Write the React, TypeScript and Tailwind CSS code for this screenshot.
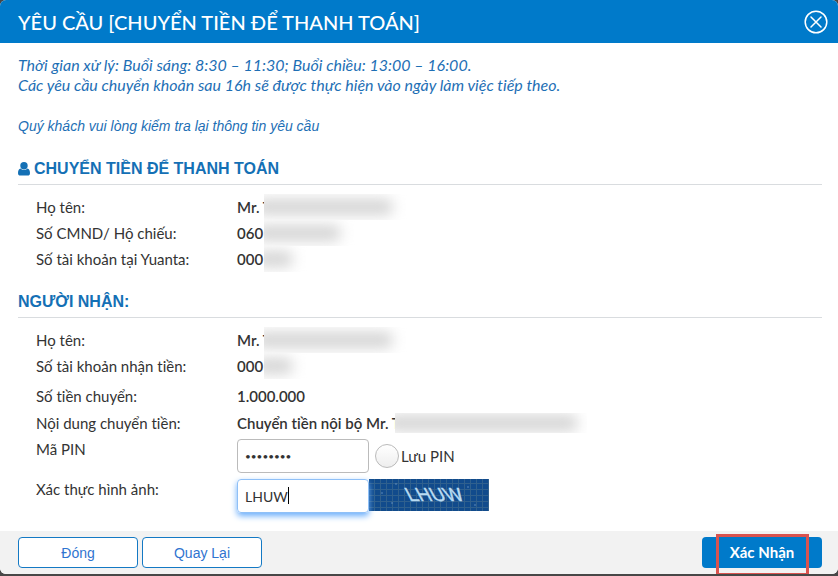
import { useState } from "react";
import type { ReactNode } from "react";

function Redacted({ bars }: { bars: string }) {
  return (
    <span aria-hidden="true" className="relative flex h-full w-48 items-center overflow-hidden bg-white">
      <span className={`-ml-2 shrink-0 rounded-sm bg-[#d4d4d4] blur-[7px] ${bars}`} />
    </span>
  );
}

function Row({ label, children, height = "h-[26px]" }: { label: string; children: ReactNode; height?: string }) {
  return (
    <div className={`flex items-center ${height}`}>
      <dt className="w-[201px] shrink-0">{label}</dt>
      <dd className="flex h-full min-w-0 items-center font-semibold whitespace-nowrap">{children}</dd>
    </div>
  );
}

function SectionTitle({ children }: { children: ReactNode }) {
  return (
    <h2 className="flex h-8 items-center gap-1 border-b border-[#d9dcdf] pt-px font-['Liberation_Sans',Arial,sans-serif] text-base font-bold text-[#1470b5]">
      {children}
    </h2>
  );
}

function Captcha() {
  return (
    <svg role="img" aria-label="Captcha" className="h-8 w-[120px] shrink-0" viewBox="0 0 120 32">
      <defs>
        <pattern id="captcha-grid" width="6" height="6" patternUnits="userSpaceOnUse">
          <path d="M5.5 0V6M0 4.5H6" stroke="#5c7f91" strokeWidth="1" opacity="0.4" />
        </pattern>
      </defs>
      <rect width="120" height="32" fill="#114b8c" />
      <rect width="120" height="32" fill="url(#captcha-grid)" />
      <g fill="#6f9dcb" opacity="0.5">
        <circle cx="13" cy="14" r="1" />
        <circle cx="27" cy="5" r="1" />
        <circle cx="23" cy="24" r="1" />
        <circle cx="77" cy="13" r="1" />
        <circle cx="99" cy="8" r="1" />
        <circle cx="106" cy="26" r="1" />
      </g>
      <text
        x="29"
        y="22"
        transform="skewX(28)"
        fill="#b9dcf3"
        stroke="#b9dcf3"
        strokeWidth="0.4"
        className="font-['Liberation_Sans',Arial,sans-serif] text-[19px]"
      >
        LHUW
      </text>
    </svg>
  );
}

export default function App() {
  const [pin, setPin] = useState("12345678");
  const [captcha, setCaptcha] = useState("LHUW");

  return (
    <div className="bg-[#474747] pb-0.5 font-[Lato,'Open_Sans',sans-serif] text-[15px] text-[#333] [font-variant-ligatures:none]">
      <div role="dialog" aria-labelledby="dialog-title" className="overflow-hidden rounded-md bg-white">
        <header className="flex h-[43px] items-center justify-between bg-[#007aca] pr-2.5 pl-[18px] text-white">
          <h1 id="dialog-title" className="text-xl font-medium">
            YÊU CẦU [CHUYỂN TIỀN ĐỂ THANH TOÁN]
          </h1>
          <button type="button" aria-label="Đóng hộp thoại">
            <svg className="size-6" viewBox="0 0 24 24" fill="none" stroke="currentColor" strokeWidth="1.5">
              <circle cx="12" cy="12" r="10.8" />
              <path d="M7 7L17 17M17 7L7 17" strokeLinecap="round" />
            </svg>
          </button>
        </header>

        <main className="px-4 pt-3 pb-[18px] pl-[18px]">
          <div className="text-base leading-5 text-[#1e6fb5] italic">
            <p>Thời gian xử lý: Buổi sáng: 8:30 – 11:30; Buổi chiều: 13:00 – 16:00.</p>
            <p>Các yêu cầu chuyển khoản sau 16h sẽ được thực hiện vào ngày làm việc tiếp theo.</p>
            <p className="mt-5 font-['Liberation_Sans',Arial,sans-serif] text-sm leading-[22px]">
              Quý khách vui lòng kiểm tra lại thông tin yêu cầu
            </p>
          </div>

          <section className="mt-4">
            <SectionTitle>
              <svg className="h-3.5 w-3" viewBox="0 0 12 14" fill="currentColor" aria-hidden="true">
                <circle cx="6" cy="3.8" r="3.7" />
                <path d="M2.6 6.4C.8 6.9 0 8.6 0 10.9 0 12.8.9 13.6 2.3 13.6H9.7C11.1 13.6 12 12.8 12 10.9 12 8.6 11.2 6.9 9.4 6.4A4.6 4.6 0 0 1 2.6 6.4Z" />
              </svg>
              CHUYỂN TIỀN ĐỂ THANH TOÁN
            </SectionTitle>
            <dl className="pt-[9px] pl-[18px]">
              <Row label="Họ tên:">
                <span className="w-[27px]">Mr. T</span>
                <Redacted bars="h-4 w-[136px]" />
              </Row>
              <Row label="Số CMND/ Hộ chiếu:">
                <span className="w-[27px]">060</span>
                <Redacted bars="h-4 w-[84px]" />
              </Row>
              <Row label="Số tài khoản tại Yuanta:">
                <span className="w-[27px]">000</span>
                <Redacted bars="h-4 w-9" />
              </Row>
            </dl>
          </section>

          <section className="mt-[14px]">
            <SectionTitle>NGƯỜI NHẬN:</SectionTitle>
            <dl className="pt-[9px] pl-[18px]">
              <Row label="Họ tên:">
                <span className="w-[27px]">Mr. T</span>
                <Redacted bars="h-4 w-[136px]" />
              </Row>
              <Row label="Số tài khoản nhận tiền:">
                <span className="w-[27px]">000</span>
                <Redacted bars="h-4 w-9" />
              </Row>
              <Row label="Số tiền chuyển:" height="h-[34px]">
                1.000.000
              </Row>
              <Row label="Nội dung chuyển tiền:" height="h-5">
                <span className="w-[158px]">Chuyển tiền nội bộ Mr. T</span>
                <Redacted bars="h-4 w-[190px]" />
              </Row>
            </dl>
            <form id="confirm-form" className="mt-1.5 flex flex-col gap-1.5 pl-[18px]" onSubmit={(e) => e.preventDefault()}>
              <div className="flex">
                <label htmlFor="pin" className="w-[201px] shrink-0 leading-5">
                  Mã PIN
                </label>
                <input
                  id="pin"
                  type="password"
                  value={pin}
                  onChange={(e) => setPin(e.target.value)}
                  className="h-[34px] w-[132px] rounded border border-[#bbb] px-[7px] text-[10px] outline-none"
                />
                <label className="ml-1.5 flex items-center gap-0.5">
                  <input
                    type="checkbox"
                    className="size-6 appearance-none rounded-full border border-[#bbb] bg-linear-to-b from-white to-[#eee] checked:to-[#007aca]"
                  />
                  Lưu PIN
                </label>
              </div>
              <div className="flex">
                <label htmlFor="captcha" className="w-[201px] shrink-0 leading-5">
                  Xác thực hình ảnh:
                </label>
                <div className="relative">
                  <input
                    id="captcha"
                    type="text"
                    autoFocus
                    value={captcha}
                    onChange={(e) => setCaptcha(e.target.value)}
                    className="h-[34px] w-[132px] rounded border border-[#8fc0f7] px-[7px] text-sm caret-transparent shadow-[0_3px_6px_#6aaefb] outline-none"
                  />
                  <span aria-hidden="true" className="pointer-events-none absolute top-2 left-[51px] h-[17px] w-px bg-black" />
                </div>
                <Captcha />
              </div>
            </form>
          </section>
        </main>

        <footer className="flex h-[43px] gap-1 bg-[#f2f2f2] px-4 pt-1.5 pl-[18px]">
          <button type="button" className="h-[31px] w-[120px] rounded border border-[#1479c4] bg-white font-['Liberation_Sans',Arial,sans-serif] text-sm text-[#2f74d0]">
            Đóng
          </button>
          <button type="button" className="h-[31px] w-[120px] rounded border border-[#1479c4] bg-white font-['Liberation_Sans',Arial,sans-serif] text-sm text-[#2f74d0]">
            Quay Lại
          </button>
          <div className="relative ml-auto">
            <button type="submit" form="confirm-form" className="h-[31px] w-[120px] rounded bg-[#007aca] font-bold text-white">
              Xác Nhận
            </button>
            <span aria-hidden="true" className="pointer-events-none absolute -top-[3px] left-[14px] h-[42px] w-[93px] border-3 border-[#d9534f]" />
          </div>
        </footer>
      </div>
    </div>
  );
}
